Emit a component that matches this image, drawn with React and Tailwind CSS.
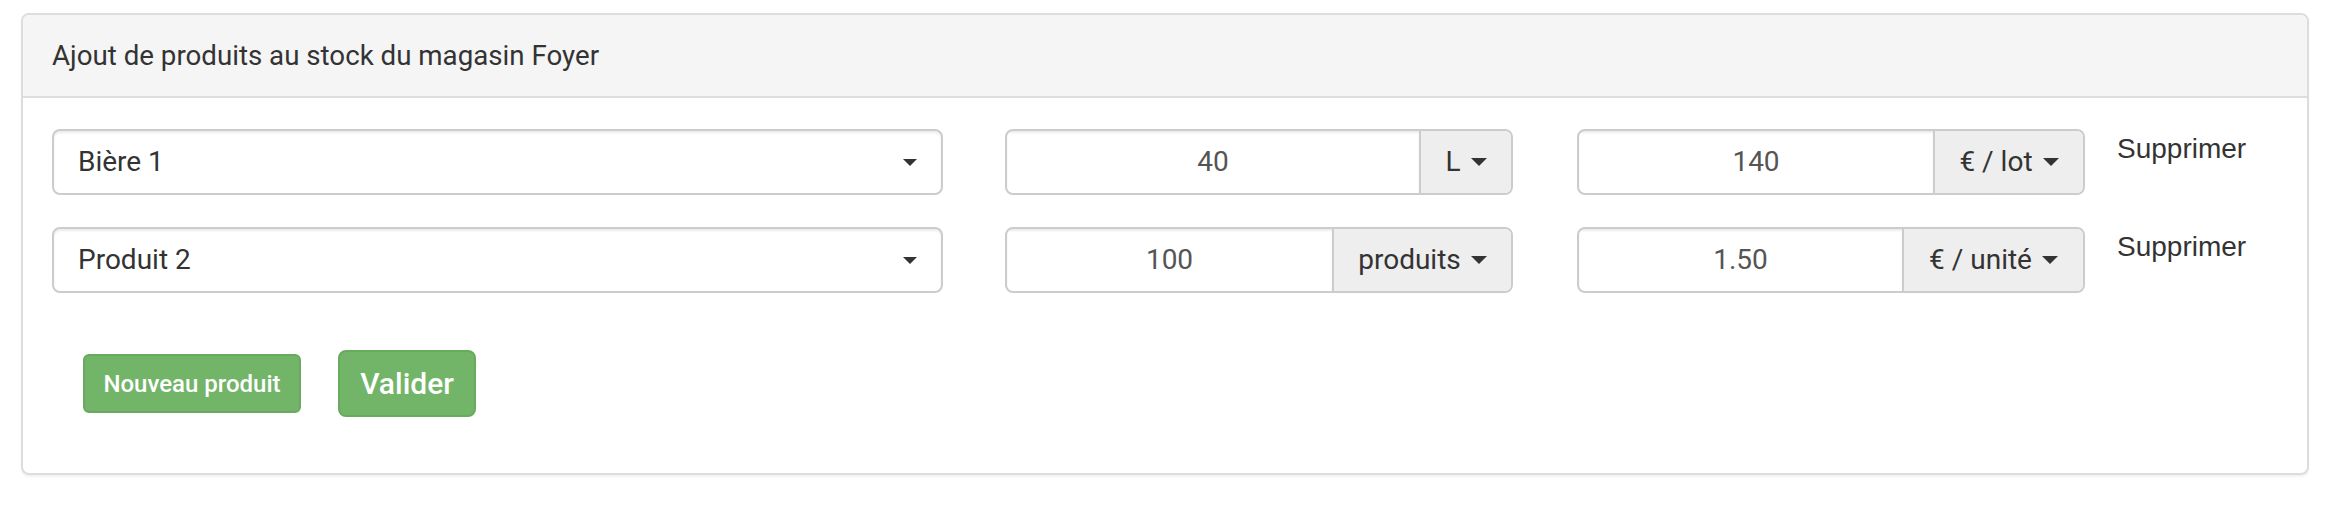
import React from 'react';

const rows = [
  { product: 'Bière 1', qty: '40', unit: 'L', unitW: 'w-[92px]', price: '140', priceUnit: '€ / lot', priceW: 'w-[150px]' },
  { product: 'Produit 2', qty: '100', unit: 'produits', unitW: 'w-[179px]', price: '1.50', priceUnit: '€ / unité', priceW: 'w-[181px]' },
];

const Caret = ({ small }) => (
  <span
    className={
      small
        ? 'inline-block w-0 h-0 border-t-[7px] border-x-[7px] border-x-transparent border-t-[#333]'
        : 'inline-block w-0 h-0 border-t-[8px] border-x-[8px] border-x-transparent border-t-[#333]'
    }
  />
);

const InputGroup = ({ value, unit, unitW }) => (
  <div className="w-[508px] h-[66px] flex border-2 border-[#ccc] rounded-[8px] overflow-hidden">
    <div className="flex-1 flex items-center justify-center text-[#555] shadow-[inset_0_2px_2px_rgba(0,0,0,0.075)]">
      {value}
    </div>
    <div className={`${unitW} shrink-0 border-l-2 border-[#ccc] bg-[#eee] flex items-center justify-center gap-[10px] text-[#333]`}>
      <span>{unit}</span>
      <Caret />
    </div>
  </div>
);

export default function App() {
  return (
    <div className="min-h-[510px] bg-white pt-[13px] pl-[21px] pr-[19px] font-['Roboto',sans-serif] text-[28px] leading-[40px]">
      <div className="border-2 border-[#ddd] rounded-[8px] shadow-[0_2px_2px_rgba(0,0,0,0.05)] overflow-hidden">
        {/* header */}
        <div className="h-[83px] bg-[#f5f5f5] border-b-2 border-[#ddd] px-[29px] flex items-center text-[#333] text-[27.7px]">
          Ajout de produits au stock du magasin Foyer
        </div>

        {/* body */}
        <div className="pt-[31px] px-[29px] pb-[56px]">
          <div className="flex flex-col gap-[32px]">
            {rows.map((r, i) => (
              <div key={i} className="flex items-start">
                <div className="w-[891px] h-[66px] border-2 border-[#ccc] rounded-[8px] pl-[24px] pr-[24px] flex items-center justify-between text-[#333] shadow-[inset_0_2px_2px_rgba(0,0,0,0.075)]">
                  <span>{r.product}</span>
                  <Caret small />
                </div>
                <div className="ml-[62px]">
                  <InputGroup value={r.qty} unit={r.unit} unitW={r.unitW} />
                </div>
                <div className="ml-[64px]">
                  <InputGroup value={r.price} unit={r.priceUnit} unitW={r.priceW} />
                </div>
                <div className="ml-[32px] font-['Liberation_Sans',Arial,sans-serif] text-[#333]">Supprimer</div>
              </div>
            ))}
          </div>

          <div className="mt-[57px] ml-[31px] flex items-center gap-[37px] font-medium text-white">
            <button className="h-[59px] w-[218px] rounded-[6px] border-2 border-[#68aa5e] bg-[#72b468] text-[24px]">
              Nouveau produit
            </button>
            <button className="h-[67px] w-[138px] rounded-[8px] border-2 border-[#68aa5e] bg-[#72b468] text-[30px]">
              Valider
            </button>
          </div>
        </div>
      </div>
    </div>
  );
}
